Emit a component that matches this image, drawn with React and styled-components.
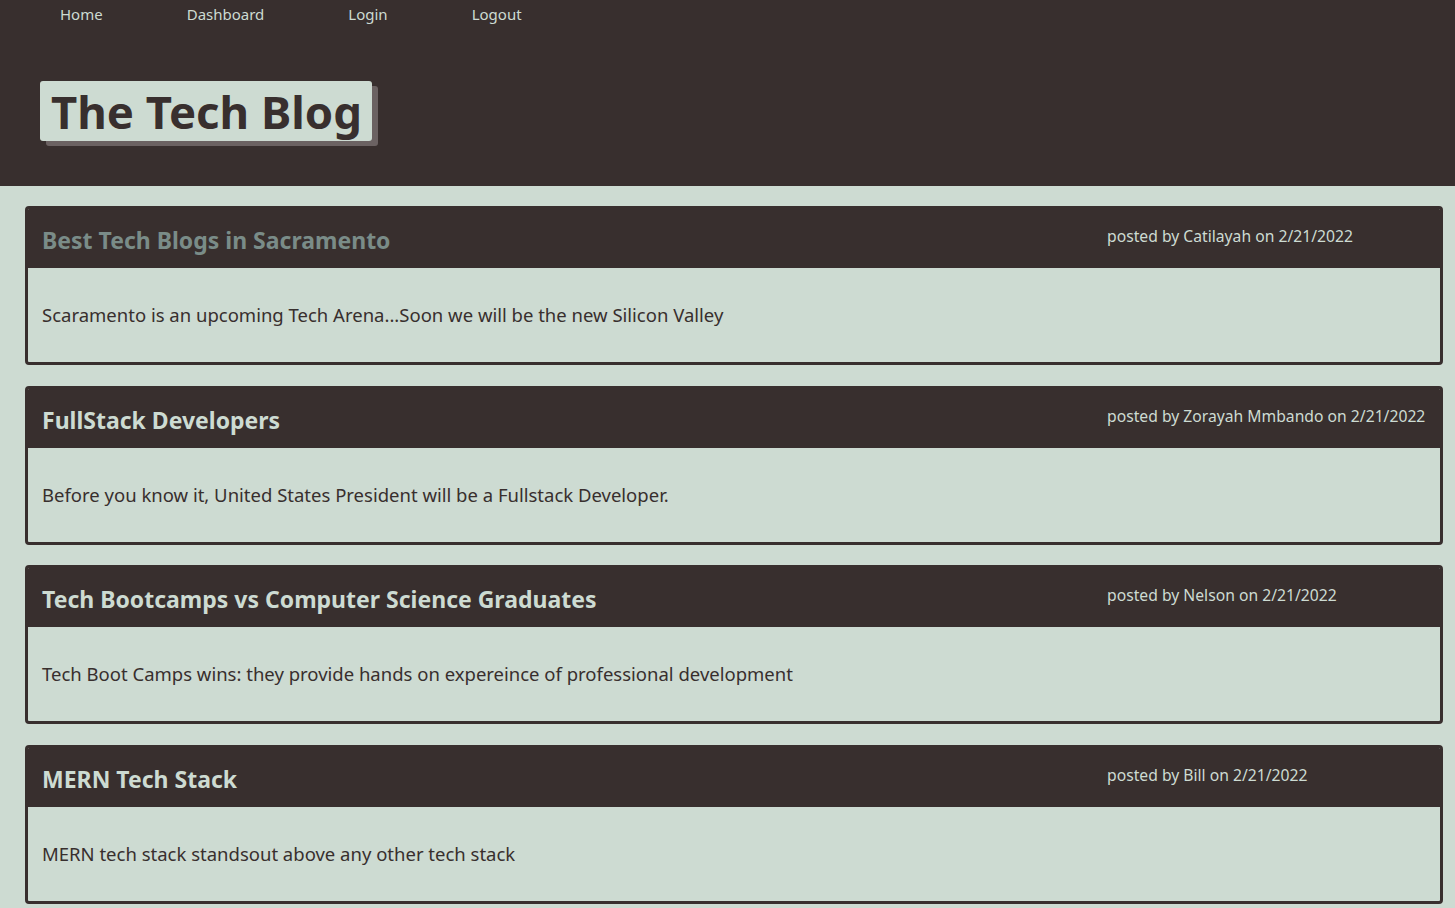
import React from "react";
import styled, { createGlobalStyle } from "styled-components";

const GlobalStyle = createGlobalStyle`
  * { box-sizing: border-box; }
  body {
    margin: 0;
    background: #cddbd2;
    font-family: "Noto Sans", "Open Sans", sans-serif;
  }
`;

// Header
const Header = styled.header`
  background: #382f2e;
  height: 186px;
  padding: 0 40px;
`;

const Nav = styled.nav`
  display: flex;
  gap: 84px;
  padding: 3px 0 0 20px;
`;

const NavLink = styled.a`
  color: #cddbd2;
  font-size: 15px;
  line-height: 22px;
  text-decoration: none;
  cursor: pointer;
`;

const Title = styled.h1`
  display: inline-block;
  margin: 56px 0 0;
  padding: 0 10px 0 11px;
  height: 60px;
  line-height: 60px;
  background: #cddbd2;
  color: #382f2e;
  font-size: 45.5px;
  font-weight: 700;
  border-radius: 3px;
  box-shadow: 6px 5px 0 #6b6262;
`;

// Posts
const Main = styled.main`
  display: flex;
  flex-direction: column;
  gap: 20.7px;
  padding: 20px 12px 20px 25px;
`;

const Card = styled.article`
  border: 3px solid #382f2e;
  border-radius: 4px;
  overflow: hidden;
`;

const CardHeader = styled.div`
  display: grid;
  grid-template-columns: 1fr 319px;
  align-items: start;
  background: #382f2e;
  height: 59px;
  padding: 0 14px;
`;

const PostTitle = styled.h2`
  margin: 0;
  padding-top: 15px;
  font-size: 23px;
  line-height: 32px;
  font-weight: 700;
  color: ${(p) => (p.$dim ? "#7a8c88" : "#cddbd2")};
`;

const Meta = styled.span`
  padding-top: 16px;
  font-size: 15.7px;
  line-height: 22px;
  color: #cddbd2;
`;

const CardBody = styled.p`
  margin: 0;
  height: 94px;
  padding: 34px 14px 0;
  font-size: 18.5px;
  line-height: 26px;
  color: #382f2e;
`;

const posts = [
  {
    title: "Best Tech Blogs in Sacramento",
    author: "Catilayah",
    body: "Scaramento is an upcoming Tech Arena...Soon we will be the new Silicon Valley",
    dim: true,
  },
  {
    title: "FullStack Developers",
    author: "Zorayah Mmbando",
    body: "Before you know it, United States President will be a Fullstack Developer.",
  },
  {
    title: "Tech Bootcamps vs Computer Science Graduates",
    author: "Nelson",
    body: "Tech Boot Camps wins: they provide hands on expereince of professional development",
  },
  {
    title: "MERN Tech Stack",
    author: "Bill",
    body: "MERN tech stack standsout above any other tech stack",
  },
];

const App = () => {
  return (
    <>
      <GlobalStyle />
      <Header>
        <Nav>
          <NavLink>Home</NavLink>
          <NavLink>Dashboard</NavLink>
          <NavLink>Login</NavLink>
          <NavLink>Logout</NavLink>
        </Nav>
        <Title>The Tech Blog</Title>
      </Header>
      <Main>
        {posts.map((post) => (
          <Card key={post.title}>
            <CardHeader>
              <PostTitle $dim={post.dim}>{post.title}</PostTitle>
              <Meta>
                posted by {post.author} on 2/21/2022
              </Meta>
            </CardHeader>
            <CardBody>{post.body}</CardBody>
          </Card>
        ))}
      </Main>
    </>
  );
};

export default App;
